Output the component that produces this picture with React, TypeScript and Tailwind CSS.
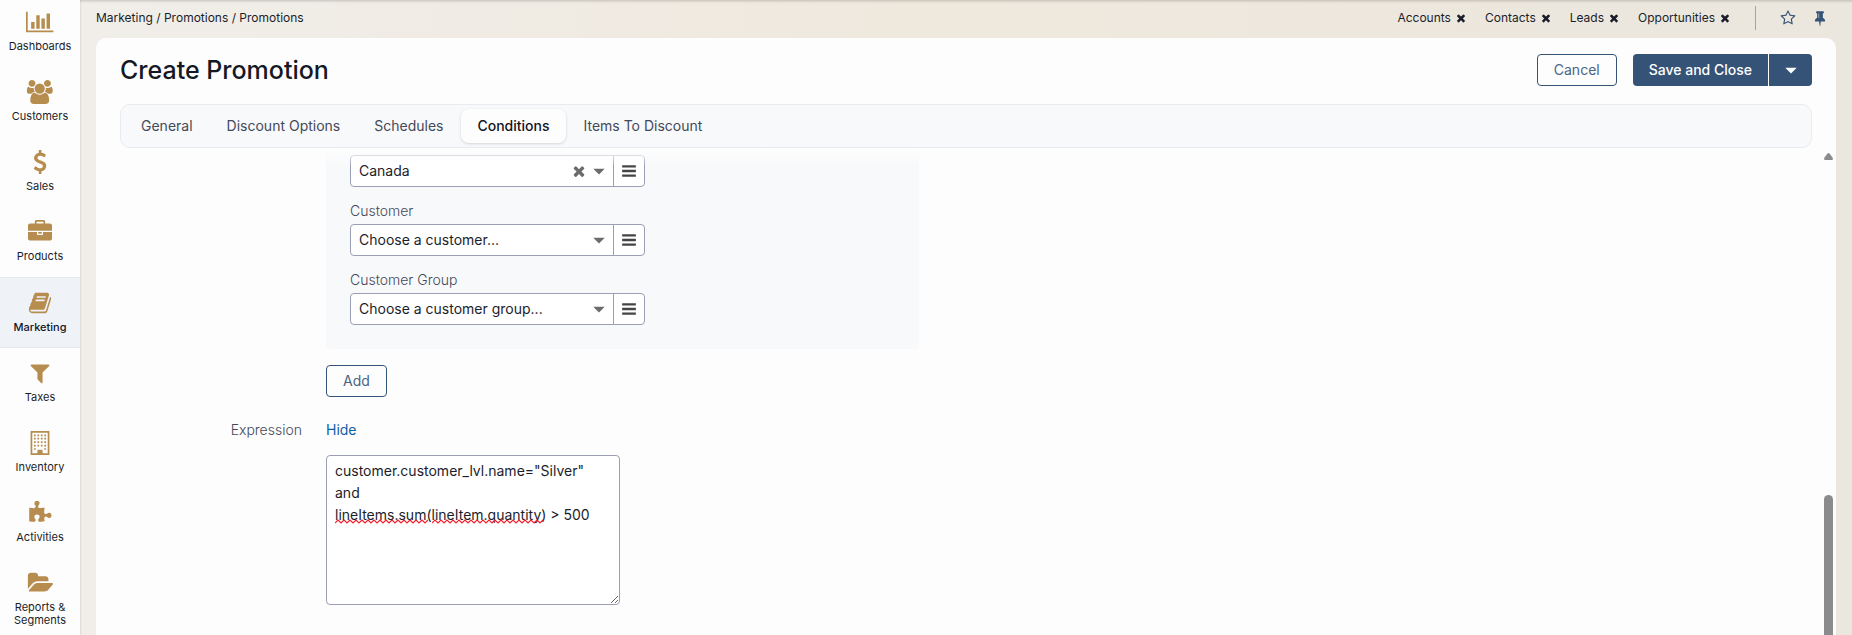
import clsx from "clsx";
import type { ReactNode } from "react";

type IconProps = { path: string; width?: number; className?: string };

function Icon({ path, width = 1792, className }: IconProps) {
  return (
    <svg
      className={className}
      viewBox={`0 0 ${width} 1792`}
      fill="currentColor"
      aria-hidden="true"
    >
      <path d={path} />
    </svg>
  );
}

const icons = {
  chart:
    "M640 896v512h-256v-512h256zm384-512v1024h-256v-1024h256zm1024 1152v128h-2048v-1536h128v1408h1920zm-640-896v768h-256v-768h256zm384-384v1152h-256v-1152h256z",
  users:
    "M657 896q-162 5-265 128h-134q-82 0-138-40.5t-56-118.5q0-353 124-353 6 0 43.5 21t97.5 42.5 119 21.5q67 0 133-23-5 37-5 66 0 159 93 256zm1071 637q0 120-73 189.5t-194 69.5h-874q-121 0-194-69.5t-73-189.5q0-53 3.5-103.5t14-109 26.5-108.5 43-97.5 62-81 85.5-53.5 111.5-20q10 0 43 21.5t73 48 107 48 135 21.5 135-21.5 107-48 73-48 43-21.5q61 0 111.5 20t85.5 53.5 62 81 43 97.5 26.5 108.5 14 109 3.5 103.5zm-1024-1277q0 106-75 181t-181 75-181-75-75-181 75-181 181-75 181 75 75 181zm704 384q0 159-112.5 271.5t-271.5 112.5-271.5-112.5-112.5-271.5 112.5-271.5 271.5-112.5 271.5 112.5 112.5 271.5zm576 225q0 78-56 118.5t-138 40.5h-134q-103-123-265-128 93-97 93-256 0-29-5-66 66 23 133 23 59 0 119-21.5t97.5-42.5 43.5-21q124 0 124 353zm-128-609q0 106-75 181t-181 75-181-75-75-181 75-181 181-75 181 75 75 181z",
  dollar:
    "M1362 1185q0 153-99.5 263.5t-258.5 136.5v175q0 14-9 23t-23 9h-135q-13 0-22.5-9.5t-9.5-22.5v-175q-66-9-127.5-31t-101.5-44.5-74-48-46.5-37.5-17.5-18q-17-21-2-41l103-135q7-10 23-12 15-2 24 9l2 2q113 99 243 125 37 8 74 8 81 0 142.5-43t61.5-122q0-28-15-53t-33.5-42-58.5-37.5-66-32-80-32.5q-39-16-61.5-25t-61.5-26.5-62.5-31-56.5-35.5-53.5-42.5-43.5-49-35.5-58-21-66.5-8.5-78q0-138 98-242t255-134v-180q0-13 9.5-22.5t22.5-9.5h135q14 0 23 9t9 23v176q57 6 110.5 23t87 33.5 63.5 37.5 39 29 15 14q17 18 5 38l-81 146q-8 15-23 16-14 3-27-7-3-3-14.5-12t-39-26.5-58.5-32-74.5-26-85.5-11.5q-95 0-155 43t-60 111q0 26 8.5 48t29.5 41.5 39.5 33 56 31 60.5 27 70 27.5q53 20 81 31.5t76 35 75.5 42.5 62 50 53 63.5 31.5 76.5 13 94z",
  briefcase:
    "M640 256h512v-128h-512v128zm1152 640v480q0 66-47 113t-113 47h-1472q-66 0-113-47t-47-113v-480h672v160q0 26 19 45t45 19h320q26 0 45-19t19-45v-160h672zm-768 0v128h-256v-128h256zm768-480v384h-1792v-384q0-66 47-113t113-47h352v-160q0-40 28-68t68-28h576q40 0 68 28t28 68v160h352q66 0 113 47t47 113z",
  book: "M1703 478q40 57 18 129l-275 906q-19 64-76.5 107.5t-122.5 43.5h-923q-77 0-148.5-53.5t-99.5-131.5q-24-67-2-127 0-4 3-27t4-37q1-8-3-21.5t-3-19.5q2-11 8-21t16.5-23.5 16.5-23.5q23-38 45-91.5t30-91.5q3-10 .5-30t-.5-28q3-11 17-28t17-23q21-36 42-92t25-90q1-9-2.5-32t.5-28q4-13 22-30.5t22-22.5q19-26 42.5-84.5t27.5-96.5q1-8-3-25.5t-2-26.5q2-8 9-18t18-23 17-21q8-12 16.5-30.5t15-35 16-36 19.5-32 26.5-23.5 36-11.5 47.5 5.5l-1 3q38-9 51-9h761q74 0 114 56t18 130l-274 906q-36 119-71.5 153.5t-128.5 34.5h-869q-27 0-38 15-11 16-1 43 24 70 144 70h923q29 0 56-15.5t35-41.5l300-987q7-22 5-57 38 15 59 43zm-1064 2q-4 13 2 22.5t20 9.5h608q13 0 25.5-9.5t16.5-22.5l21-64q4-13-2-22.5t-20-9.5h-608q-13 0-25.5 9.5t-16.5 22.5zm-83 256q-4 13 2 22.5t20 9.5h608q13 0 25.5-9.5t16.5-22.5l21-64q4-13-2-22.5t-20-9.5h-608q-13 0-25.5 9.5t-16.5 22.5z",
  filter:
    "M1595 295q17 41-14 70l-493 493v742q0 42-39 59-13 5-25 5-27 0-45-19l-256-256q-19-19-19-45v-486l-493-493q-31-29-14-70 17-39 59-39h1280q42 0 59 39z",
  building:
    "M192 0h1408v1792h-1408zM320 128v1536h384v-192q0-64 64-64h256q64 0 64 64v192h384v-1536zM448 256h128v128h-128zM704 256h128v128h-128zM960 256h128v128h-128zM1216 256h128v128h-128zM448 512h128v128h-128zM704 512h128v128h-128zM960 512h128v128h-128zM1216 512h128v128h-128zM448 768h128v128h-128zM704 768h128v128h-128zM960 768h128v128h-128zM1216 768h128v128h-128zM448 1024h128v128h-128zM704 1024h128v128h-128zM960 1024h128v128h-128zM1216 1024h128v128h-128zM448 1280h128v128h-128zM1216 1280h128v128h-128z",
  puzzle:
    "M1755 1083q0 81-44.5 135t-123.5 54q-41 0-77.5-17.5t-59-38-56.5-38-71-17.5q-110 0-110 124 0 39 16 115t15 115v5q-22 0-33 1-34 3-97.5 11.5t-115.5 13.5-98 5q-61 0-103-26.5t-42-83.5q0-37 17.5-71t38-56.5 38-59 17.5-77.5q0-79-54-123.5t-135-44.5q-84 0-143 45.5t-59 127.5q0 43 15 83t33.5 64.5 33.5 53 15 50.5q0 45-46 89-37 35-117 35-95 0-245-24-9-2-27.5-4t-27.5-4l-13-2q-1 0-3-1-2 0-2-1v-1024q2 1 17.5 3.5t34 5 21.5 3.5q150 24 245 24 80 0 117-35 46-44 46-89 0-22-15-50.5t-33.5-53-33.5-64.5-15-83q0-82 59-127.5t144-45.5q80 0 134 44.5t54 123.5q0 41-17.5 77.5t-38 59-38 56.5-17.5 71q0 57 42 83.5t103 26.5q64 0 180-15t163-17v2q-1 2-3.5 17.5t-5 34-3.5 21.5q-24 150-24 245 0 80 35 117 44 46 89 46 22 0 50.5-15t53-33.5 64.5-33.5 83-15q82 0 127.5 59t45.5 143z",
  folder:
    "M1943 952q0 31-31 66l-336 396q-43 51-120.5 86.5t-143.5 35.5h-1088q-34 0-60.5-13t-26.5-43q0-31 31-66l336-396q43-51 120.5-86.5t143.5-35.5h1088q34 0 60.5 13t26.5 43zm-343-344v160h-832q-94 0-197 47.5t-164 119.5l-337 396-5 6q0-4-.5-12.5t-.5-12.5v-960q0-92 66-158t158-66h320q92 0 158 66t66 158v32h544q92 0 158 66t66 158z",
  times:
    "M1490 1322q0 40-28 68l-136 136q-28 28-68 28t-68-28l-294-294-294 294q-28 28-68 28t-68-28l-136-136q-28-28-28-68t28-68l294-294-294-294q-28-28-28-68t28-68l136-136q28-28 68-28t68 28l294 294 294-294q28-28 68-28t68 28l136 136q28 28 28 68t-28 68l-294 294 294 294q28 28 28 68z",
  star: "M1201 1004l306-297-422-62-189-382-189 382-422 62 306 297-73 421 378-199 377 199zm527-357q0 22-26 48l-363 354 86 500q1 7 1 20 0 50-41 50-19 0-40-12l-449-236-449 236q-22 12-40 12-21 0-31.5-14.5t-10.5-35.5q0-6 2-20l86-500-364-354q-25-27-25-48 0-37 56-46l502-73 225-455q19-41 49-41t49 41l225 455 502 73q56 9 56 46z",
  pin: "M800 864v-448q0-14-9-23t-23-9-23 9-9 23v448q0 14 9 23t23 9 23-9 9-23zm672 352q0 26-19 45t-45 19h-429l-51 483q-2 12-10.5 20.5t-20.5 8.5h-1q-27 0-32-27l-76-485h-404q-26 0-45-19t-19-45q0-123 78.5-221.5t177.5-98.5v-512q-52 0-90-38t-38-90 38-90 90-38h640q52 0 90 38t38 90-38 90-90 38v512q99 0 177.5 98.5t78.5 221.5z",
  bars: "M128 256h1536v256h-1536zM128 768h1536v256h-1536zM128 1280h1536v256h-1536z",
  caret: "M256 640h1280l-640 640z",
};

const menu = [
  { label: "Dashboards", icon: icons.chart, width: 2048 },
  { label: "Customers", icon: icons.users, width: 2048 },
  { label: "Sales", icon: icons.dollar },
  { label: "Products", icon: icons.briefcase },
  { label: "Marketing", icon: icons.book, active: true },
  { label: "Taxes", icon: icons.filter },
  { label: "Inventory", icon: icons.building },
  { label: "Activities", icon: icons.puzzle },
  { label: "Reports & Segments", icon: icons.folder, width: 1943 },
];

const pinned = ["Accounts", "Contacts", "Leads", "Opportunities"];

const tabs = [
  "General",
  "Discount Options",
  "Schedules",
  "Conditions",
  "Items To Discount",
];

const expression = `customer.customer_lvl.name="Silver" and
lineItems.sum(lineItem.quantity) > 500`;

function Sidebar() {
  return (
    <nav className="z-10 w-20 shrink-0 overflow-hidden bg-[#fdfdfd] shadow-[0_0_2px_rgba(0,0,0,0.2)]">
      {/* the menu is scrolled down by a few pixels */}
      <ul className="-mt-[3px]">
        {menu.map((item) => (
          <li key={item.label}>
            <a
              href="#"
              className={clsx(
                "flex flex-col items-center px-1 pt-[13px] text-center text-[11px] leading-[13px]",
                item.active
                  ? "h-[71px] border-y border-[#e4e9f0] bg-[#eff3f8] font-medium text-[#12141f]"
                  : "h-[70px] text-[#1b1d2a]"
              )}
            >
              <Icon
                path={item.icon}
                width={item.width}
                className="h-6 w-auto text-[#b68d4f]"
              />
              <span className="mt-1.5">{item.label}</span>
            </a>
          </li>
        ))}
      </ul>
    </nav>
  );
}

function TopBar() {
  return (
    <div className="flex h-[38px] shrink-0 items-center justify-between pr-2 pb-0.5 text-xs text-[#1b1d2a]">
      <div>Marketing / Promotions / Promotions</div>
      <div className="flex items-center">
        <ul className="flex gap-[18px]">
          {pinned.map((name) => (
            <li key={name} className="flex items-center gap-1">
              <a href="#">{name}</a>
              <button aria-label={`Close ${name}`}>
                <Icon path={icons.times} className="size-3" />
              </button>
            </li>
          ))}
        </ul>
        <div className="ml-6 h-6 w-px bg-[#9ba5b7]" />
        <button aria-label="Favorite" className="ml-6 text-[#355377]">
          <Icon path={icons.star} className="size-4" />
        </button>
        <button aria-label="Pin page" className="ml-4 text-[#355377]">
          <Icon path={icons.pin} className="size-4" />
        </button>
      </div>
    </div>
  );
}

function OutlineButton({ children }: { children: ReactNode }) {
  return (
    <button className="h-8 rounded border border-[#355377] bg-[#fdfdfd] px-4 text-[#4a6484]">
      {children}
    </button>
  );
}

type SelectFieldProps = { id: string; value: string; clearable?: boolean };

function SelectField({ id, value, clearable }: SelectFieldProps) {
  return (
    <div className="flex h-8 w-[295px] rounded border border-[#9a9fb4] bg-white">
      <div className="relative flex-1">
        <select
          id={id}
          aria-label={clearable ? "Country" : undefined}
          className="size-full appearance-none pl-2 text-[#1b1d2a] outline-none"
        >
          <option>{value}</option>
        </select>
        <div className="pointer-events-none absolute inset-y-0 right-1.5 flex items-center gap-1 text-[#6b6b6b]">
          {clearable && <Icon path={icons.times} className="size-4" />}
          <Icon path={icons.caret} className="size-4" />
        </div>
      </div>
      <button
        aria-label="Open list"
        className="flex w-[31px] items-center justify-center border-l border-[#9a9fb4] text-[#444]"
      >
        <Icon path={icons.bars} className="size-4" />
      </button>
    </div>
  );
}

function Squiggle({ width }: { width: number }) {
  const points = Array.from(
    { length: Math.floor(width / 3) + 1 },
    (_, i) => `${i * 3},${i % 2 ? 1 : 4}`
  ).join(" ");

  return (
    <svg width={width} height="5" fill="none" stroke="#f5222d" aria-hidden="true">
      <polyline points={points} strokeWidth="1.2" />
    </svg>
  );
}

function ConditionsForm() {
  return (
    <div className="relative min-w-0 flex-1 pl-[206px]">
      <section className="h-[199px] w-[593px] rounded-sm bg-[#f8f9fb] px-6 pt-[5px]">
        <SelectField id="country" value="Canada" clearable />
        <label htmlFor="customer" className="mt-3.5 block h-[23px] leading-5 font-light">
          Customer
        </label>
        <SelectField id="customer" value="Choose a customer..." />
        <label htmlFor="group" className="mt-3.5 block h-[23px] leading-5 font-light">
          Customer Group
        </label>
        <SelectField id="group" value="Choose a customer group..." />
      </section>
      <div className="pointer-events-none absolute inset-x-0 top-0 h-4 bg-linear-to-b from-[#fdfdfd] to-transparent" />
      <div className="mt-4">
        <OutlineButton>Add</OutlineButton>
      </div>
      <div className="-ml-[206px] mt-[22px] flex gap-6 leading-[22px]">
        <label htmlFor="expression" className="w-[182px] text-right font-light">
          Expression
        </label>
        <a href="#" className="text-[#0f5ea8]">
          Hide
        </a>
      </div>
      <div className="relative mt-[14px] w-[294px]">
        <textarea
          id="expression"
          spellCheck={false}
          defaultValue={expression}
          className="block h-[150px] w-full resize rounded border border-[#9a9fb4] bg-white px-2 py-1 leading-[22px] text-[#1b1d2a] outline-none"
        />
        <div className="pointer-events-none absolute left-[9px] top-16 flex gap-1">
          <Squiggle width={93} />
          <Squiggle width={111} />
        </div>
      </div>
    </div>
  );
}

export default function App() {
  return (
    <div className="flex h-screen overflow-hidden bg-linear-to-r from-[#f1efeb] via-[#efe8dd] to-[#ebe7de] font-['Inter',sans-serif] text-sm text-[#444959]">
      <Sidebar />
      <div className="flex min-w-0 flex-1 flex-col px-4 shadow-[inset_0_3px_3px_-2px_rgba(0,0,0,0.2)]">
        <TopBar />
        <main className="flex min-h-0 flex-1 flex-col rounded-t-[10px] bg-[#fdfdfd]">
          <header className="flex items-center justify-between px-6 pt-4">
            <h1 className="text-[25px] leading-8 font-medium text-[#151825]">
              Create Promotion
            </h1>
            <div className="flex gap-4">
              <OutlineButton>Cancel</OutlineButton>
              <div className="flex h-8 gap-px font-medium text-white">
                <button className="rounded-l bg-[#355377] px-4">
                  Save and Close
                </button>
                <button
                  aria-label="More save actions"
                  className="flex w-[43px] items-center justify-center rounded-r bg-[#355377]"
                >
                  <Icon path={icons.caret} className="size-4" />
                </button>
              </div>
            </div>
          </header>
          <div
            role="tablist"
            className="mx-6 mt-[18px] flex h-11 shrink-0 gap-0.5 rounded-[10px] border border-[#e9ebf0] bg-[#f8f9fb] p-1"
          >
            {tabs.map((tab) => (
              <button
                key={tab}
                role="tab"
                aria-selected={tab === "Conditions"}
                className={clsx(
                  "rounded-lg px-4",
                  tab === "Conditions" &&
                    "bg-[#fdfdfd] font-medium text-[#12141f] shadow-[0_1px_3px_rgba(0,0,0,0.15)]"
                )}
              >
                {tab}
              </button>
            ))}
          </div>
          <div className="flex min-h-0 flex-1 overflow-hidden pl-6 pt-0.5">
            <ConditionsForm />
            {/* scrollbar */}
            <div className="flex w-3 shrink-0 flex-col items-start pt-[3px]">
              <svg width="9" height="7" fill="#8b8b8b" aria-hidden="true">
                <path d="M3.5 .5Q4.500 -.5 5.500 .5L8.500 4.500Q9.500 7 8 7H1Q-.5 7 .5 4.500Z" />
              </svg>
              <div className="mt-[335px] w-[9px] flex-1 rounded-t-full bg-[#8b8b8b]" />
            </div>
          </div>
        </main>
      </div>
    </div>
  );
}
